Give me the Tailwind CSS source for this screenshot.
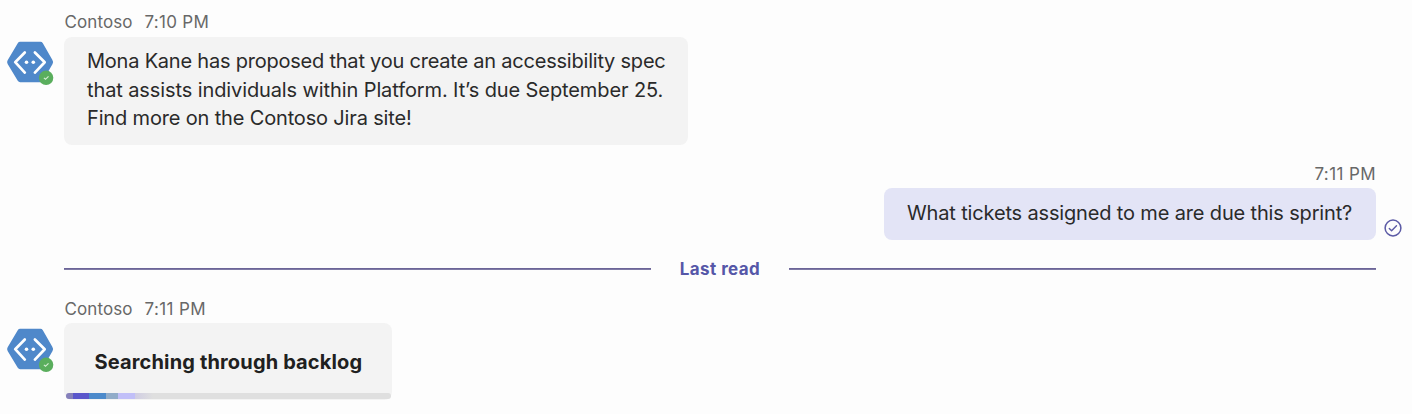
<!DOCTYPE html>
<html lang="en">
<head>
<meta charset="utf-8">
<title>Chat</title>
<script src="https://cdn.jsdelivr.net/npm/@tailwindcss/browser@4"></script>
</head>
<body class="h-[414px] w-[1412px] overflow-hidden bg-[#fdfdfd] font-['Inter','Liberation_Sans',sans-serif] text-[#2a2a2a]">
<svg class="hidden" aria-hidden="true">
  <symbol id="bot" viewBox="0 0 48 48">
    <path d="M14.200 2.800h20.200q1 0 1.600 1l9.700 17q.8 1.300 0 2.600L36 40.200q-.6 1-1.600 1H14.200q-1 0-1.600-1L2.500 23.400q-.8-1.300 0-2.600L12.600 3.800q.6-1 1.600-1z" fill="#4f88ca" stroke="#4f88ca" stroke-width="2" stroke-linejoin="round"/>
    <path d="M18.800 12.500 9.200 22.200l9.600 10.400M28.900 12.500l9.800 9.700-9.800 10.400" fill="none" stroke="#fff" stroke-width="2.700" stroke-linecap="round" stroke-linejoin="round"/>
    <circle cx="20.500" cy="22.200" r="1.800" fill="#fff"/><circle cx="27.300" cy="22.200" r="1.800" fill="#fff"/>
    <circle cx="40.100" cy="37.800" r="7.200" fill="#5aae5d"/>
    <path d="m37.900 37.900 1.600 1.400 3-3" fill="none" stroke="#d5edd4" stroke-width="1.200"/>
  </symbol>
</svg>
<main class="flex flex-col pt-[10px]">
  <section class="flex pl-[6px]">
    <svg class="mt-[30px] size-12 shrink-0"><use href="#bot"/></svg>
    <div class="ml-[10px]">
      <div class="flex h-[27px] gap-3 pl-[0.500px] text-[17px] leading-[25px] text-[#686868]"><span class="w-[68px] whitespace-nowrap tracking-[0.1px]">Contoso</span><span class="whitespace-nowrap tracking-[0.3px]">7:10 PM</span></div>
      <div class="h-[108px] w-[624px] rounded-lg bg-[#f3f3f3] pt-[10px] pl-[23px] text-[20px] leading-[28.700px] whitespace-nowrap">
        <p class="tracking-[-0.220px]">Mona Kane has proposed that you create an accessibility spec</p>
        <p class="tracking-[-0.105px]">that assists individuals within Platform. It’s due September 25.</p>
        <p class="tracking-[-0.160px]">Find more on the Contoso Jira site!</p>
      </div>
    </div>
  </section>
  <section class="mt-[17px] flex justify-end pr-[10px]">
    <div class="flex flex-col items-end">
      <div class="h-[26px] text-[17px] leading-[25px] tracking-[0.4px] text-[#686868]">7:11 PM</div>
      <div class="h-[52px] w-[492px] rounded-lg bg-[#e3e4f6] pt-[11px] pl-[23px] text-[20px] leading-[28px] tracking-[-0.155px] whitespace-nowrap">What tickets assigned to me are due this sprint?</div>
    </div>
    <svg class="mt-[57px] ml-2 size-[18px]" viewBox="0 0 18 18" fill="none" stroke="#5b5aa5" stroke-width="1.500"><circle cx="9" cy="9" r="7.900"/><path d="m5.300 9.600 2.300 2.200 4.900-5" stroke-width="1.400" stroke-linecap="round" stroke-linejoin="round"/></svg>
  </section>
  <div class="mt-[17px] mr-9 ml-16 flex h-6 items-center">
    <div class="h-[2px] flex-1 bg-linear-to-b from-[#625a90] to-[#8985ad]"></div>
    <div class="w-[138px] text-center text-[17px] leading-6 font-bold tracking-[0.430px] text-[#5557a8]">Last read</div>
    <div class="h-[2px] flex-1 bg-linear-to-b from-[#625a90] to-[#8985ad]"></div>
  </div>
  <section class="mt-[16px] flex pl-[6px]">
    <svg class="mt-[30px] size-12 shrink-0"><use href="#bot"/></svg>
    <div class="ml-[10px]">
      <div class="flex h-[26px] gap-3 pl-[0.500px] text-[17px] leading-[25px] text-[#686868]"><span class="w-[68px] whitespace-nowrap tracking-[0.1px]">Contoso</span><span class="whitespace-nowrap tracking-[0.4px]">7:11 PM</span></div>
      <div class="flex h-[77px] w-[328px] flex-col justify-between rounded-lg bg-[#f3f3f3] px-px pb-px">
        <p class="pt-[25px] pl-[29.500px] text-[20px] leading-7 font-bold tracking-[0.150px] whitespace-nowrap text-[#202020]">Searching through backlog</p>
        <div class="ml-px flex h-[6px] overflow-hidden rounded-full bg-[#dfdfdf]">
          <i class="w-[7px] bg-[#8580bb]"></i><i class="w-4 bg-[#5b57cb]"></i><i class="w-[17px] bg-[#4c8acb]"></i><i class="w-3 bg-[#91acc9]"></i><i class="w-[17px] bg-[#c1bff8]"></i><i class="w-[18px] bg-linear-to-r from-[#d0cde3] to-[#dfdfdf]"></i>
        </div>
      </div>
    </div>
  </section>
</main>
</body>
</html>
